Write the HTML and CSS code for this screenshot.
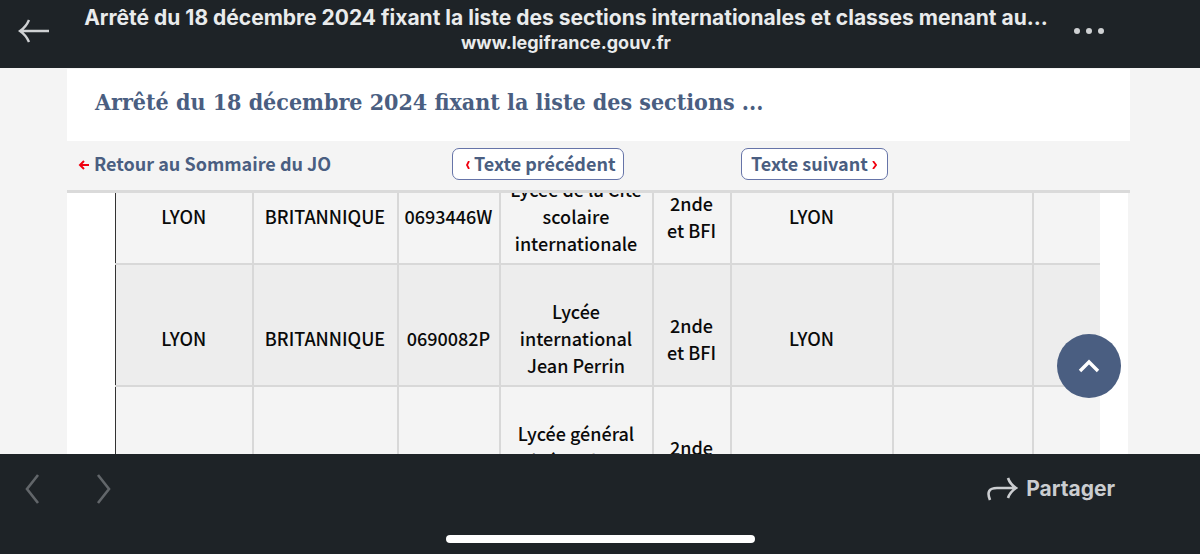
FILE: index.html
```html
<!DOCTYPE html>
<html lang="fr">
<head>
<meta charset="utf-8">
<meta name="viewport" content="width=device-width, initial-scale=1">
<title>Arrêté du 18 décembre 2024 - Légifrance</title>
<link rel="stylesheet" href="styles.css">
</head>
<body>
<header class="topbar">
  <button class="icon-button back" aria-label="Retour">
    <svg width="32" height="26" viewBox="0 0 32 26" fill="none" stroke="currentColor" stroke-width="2.4"><path d="M31 13H3M11 2Q8 9 2 13Q8 17 11 24"/></svg>
  </button>
  <div class="page-info">
    <div class="page-title">Arrêté du 18 décembre 2024 fixant la liste des sections internationales et classes menant au…</div>
    <div class="page-host">www.legifrance.gouv.fr</div>
  </div>
  <button class="icon-button more" aria-label="Plus d'options">
    <svg width="32" height="8" viewBox="0 0 32 8" fill="currentColor"><circle cx="4" cy="4" r="3"/><circle cx="16" cy="4" r="3"/><circle cx="28" cy="4" r="3"/></svg>
  </button>
</header>

<main class="viewport">
  <div class="sticky">
    <h1 class="heading">Arrêté du 18 décembre 2024 fixant la liste des sections ...</h1>
    <nav class="jo-nav">
      <a class="summary-link" href="#sommaire"><svg class="red-arrow" width="12" height="12" viewBox="0 0 12 12" fill="none" stroke="currentColor" stroke-width="2"><path d="M11 6H2M6 2L2 6L6 10"/></svg>Retour au Sommaire du JO</a>
      <a class="text-link previous" href="#precedent"><svg class="red-arrow" width="5" height="8" viewBox="0 0 5 8" fill="none" stroke="currentColor" stroke-width="1.8"><path d="M4 0L2 4L4 8"/></svg>Texte précédent</a>
      <a class="text-link" href="#suivant">Texte suivant<svg class="red-arrow" width="5" height="8" viewBox="0 0 5 8" fill="none" stroke="currentColor" stroke-width="1.8"><path d="M1 0L4 4L1 8"/></svg></a>
    </nav>
  </div>
  <div class="article">
    <table class="sections">
      <colgroup><col class="c-academy"><col class="c-section"><col class="c-code"><col class="c-school"><col class="c-level"><col class="c-city"><col class="c-note"><col class="c-extra"></colgroup>
      <tbody>
        <tr><td>LYON</td><td>BRITANNIQUE</td><td>0693446W</td><td>Lycée de la Cité<br>scolaire<br>internationale</td><td>2nde<br>et BFI</td><td>LYON</td><td></td><td></td></tr>
        <tr><td>LYON</td><td>BRITANNIQUE</td><td>0690082P</td><td>Lycée<br>international<br>Jean Perrin</td><td>2nde<br>et BFI</td><td>LYON</td><td></td><td></td></tr>
        <tr><td>LYON</td><td>BRITANNIQUE</td><td></td><td>Lycée général<br>privé Ombrosa<br>&nbsp;</td><td>2nde<br>et BFI</td><td>LYON</td><td></td><td></td></tr>
      </tbody>
    </table>
  </div>
  <button class="to-top" aria-label="Haut de page">
    <svg width="22" height="14" viewBox="0 0 22 14" fill="none" stroke="currentColor" stroke-width="3.4"><path d="M2 12L11 3L20 12"/></svg>
  </button>
</main>

<footer class="bottombar">
  <div class="toolbar">
    <div class="history">
      <button class="icon-button" aria-label="Page précédente">
        <svg width="16" height="30" viewBox="0 0 16 30" fill="none" stroke="currentColor" stroke-width="2.6"><path d="M14 1L3 15L14 29"/></svg>
      </button>
      <button class="icon-button" aria-label="Page suivante">
        <svg width="16" height="30" viewBox="0 0 16 30" fill="none" stroke="currentColor" stroke-width="2.6"><path d="M2 1L13 15L2 29"/></svg>
      </button>
    </div>
    <button class="share">
      <svg width="32" height="24" viewBox="0 0 32 24" fill="none" stroke="currentColor" stroke-width="2.6"><path d="M4 23Q-1 11 11 11H29M22 1Q24 7 30 11Q24 15 22 21"/></svg>
      Partager
    </button>
  </div>
  <div class="home-indicator"></div>
</footer>
</body>
</html>
```

FILE: styles.css
```css
* { box-sizing: border-box; }

body {
  margin: 0;
  height: 100vh;
  display: flex;
  flex-direction: column;
  overflow: hidden;
  background: #f4f4f4;
  font-family: "Source Sans Pro", "Noto Sans CJK SC", sans-serif;
}

button {
  border: 0;
  padding: 0;
  background: none;
  font: inherit;
  color: inherit;
  cursor: pointer;
}

svg { display: block; flex: none; }

.topbar {
  display: grid;
  grid-template-columns: 66px minmax(0, 1fr) 134px;
  align-items: start;
  padding: 6px 0 12px;
  background: #1e2327;
  color: #e9ebec;
  font-family: Inter, sans-serif;
  font-weight: 700;
  text-align: center;
}

.page-title {
  font-size: 21px;
  line-height: 24px;
  white-space: nowrap;
}

.page-host {
  font-size: 18px;
  line-height: 26px;
}

.icon-button { display: flex; }

.back {
  padding: 12px 0 0 18px;
  color: #cfd1d3;
}

.more {
  padding: 21px 0 0 7px;
  color: #cfd1d3;
}

.viewport {
  position: relative;
  flex: 1;
  min-height: 0;
  overflow: hidden;
  padding: 1px 70px 0 67px;
}

.sticky {
  position: relative;
  background: #f4f4f4;
  border-bottom: 3px solid #dadada;
}

.heading {
  margin: 0;
  padding: 16px 28px 23px;
  background: #fff;
  color: #4a5e81;
  font-family: "Roboto Slab", "DejaVu Serif Condensed", "DejaVu Serif", serif;
  font-size: 23px;
  font-weight: 700;
  line-height: 33px;
  white-space: nowrap;
}

.jo-nav {
  display: grid;
  grid-template-columns: 385fr 289fr 389fr;
  align-items: center;
  justify-items: start;
  padding: 7px 0 10px;
  font-size: 18px;
  font-weight: 700;
  line-height: 28px;
}

.jo-nav a {
  display: flex;
  align-items: center;
  gap: 4px;
  padding-bottom: 2px;
  color: #4a5e81;
  text-decoration: none;
  white-space: nowrap;
}

.jo-nav .summary-link { padding-left: 11px; }

.jo-nav .text-link {
  padding: 0 10px 2px 9px;
  border: 1px solid #6674a8;
  border-radius: 7px;
  background: #fff;
}

.jo-nav .previous { padding: 0 7px 2px 12px; }

.jo-nav .red-arrow { color: #f0000f; margin-top: 3px; }

.article {
  margin-right: 2px;
  padding: 0 29px 0 48px;
  background: #fff;
}

.sections {
  width: 100%;
  margin-top: -52px;
  table-layout: fixed;
  border-collapse: collapse;
  font-size: 18px;
  font-weight: 500;
  line-height: 27px;
  color: #0a0a0a;
}

.sections td {
  padding: 33px 0 6px;
  border: 2px solid #d8d8d8;
  border-right: 0;
  text-align: center;
  vertical-align: middle;
  background: #f4f4f4;
}

.sections tr:nth-child(even) td { background: #ededed; }
.sections td:first-child { border-left: 1px solid #333; }

.c-academy { width: 137px; }
.c-section { width: 145px; }
.c-code { width: 102px; }
.c-school { width: 153px; }
.c-level { width: 78px; }
.c-city { width: 162px; }
.c-note { width: 140px; }
.c-extra { width: 67px; }

.to-top {
  position: absolute;
  right: 79px;
  bottom: 56px;
  width: 64px;
  height: 64px;
  display: grid;
  place-items: center;
  border-radius: 50%;
  background: #4a5e81;
  color: #fff;
}

.bottombar {
  display: flex;
  flex-direction: column;
  align-items: center;
  gap: 31px;
  padding: 20px 0 11px;
  background: #1e2327;
  font-family: Inter, sans-serif;
}

.toolbar {
  width: 100%;
  display: flex;
  align-items: center;
  justify-content: space-between;
  padding: 0 85px 0 24px;
}

.history {
  display: flex;
  gap: 56px;
  color: #62666a;
}

.share {
  display: flex;
  align-items: center;
  gap: 8px;
  color: #cbcdd0;
  font-size: 21px;
  font-weight: 700;
  line-height: 30px;
}

.home-indicator {
  width: 309px;
  height: 8px;
  border-radius: 4px;
  background: #fff;
}
```
